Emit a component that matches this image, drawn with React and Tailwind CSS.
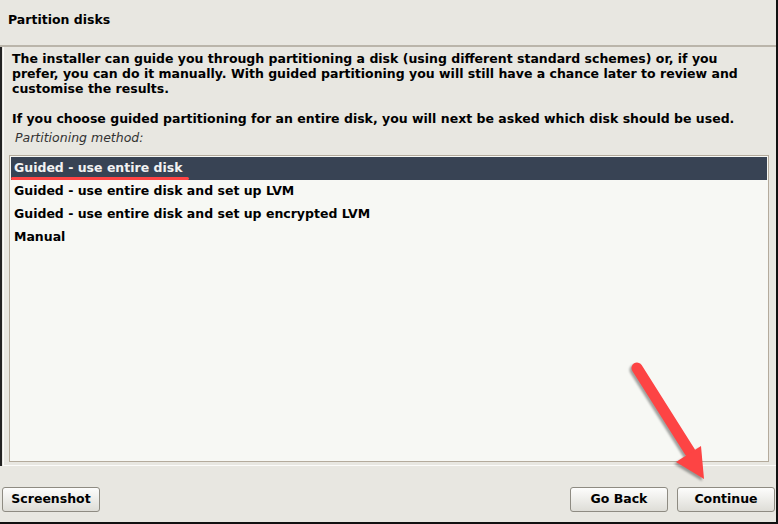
import React from 'react';

const font = { fontFamily: '"DejaVu Sans", "Liberation Sans", sans-serif' };

const methods = [
    'Guided - use entire disk',
    'Guided - use entire disk and set up LVM',
    'Guided - use entire disk and set up encrypted LVM',
    'Manual',
];

const Button = ({ children, className }) => (
    <button className={`h-[25px] border border-[#8e8b82] rounded-[3px] bg-gradient-to-b from-[#fdfdfc] to-[#deddd7] text-[12.5px] font-bold text-black ${className}`}>
        {children}
    </button>
);

const Arrow = () => (
    <svg className="absolute left-0 top-0 pointer-events-none" width="778" height="524" viewBox="0 0 778 524" style={{ filter: 'drop-shadow(-2px 2px 1px rgba(0,0,0,0.35))' }}>
        <line x1="637" y1="368" x2="690" y2="452" stroke="#fd4444" strokeWidth="11" strokeLinecap="round" />
        <polygon points="676,462 701,446 704,479" fill="#fd4444" />
    </svg>
);

export default function App() {
    return (
        <div style={font} className="relative w-[778px] h-[524px] bg-[#e8e7e1] flex flex-col border-r-2 border-b-2 border-[#111] overflow-hidden">
            <div className="h-[47px] border-b-2 border-[#bab5aa] flex items-center px-[8px] shrink-0">
                <h1 className="text-[12.5px] font-bold text-black -mt-[4px]">Partition disks</h1>
            </div>
            <div className="flex-1 flex flex-col border-l-2 border-[#222] pl-[1px]">
                <div className="flex-1 flex flex-col border-l border-b border-[#fbfbf9] pt-[4px] pb-[3px] pr-[7px] pl-[5px]">
                    <div className="text-[12.5px] leading-[15px] font-bold text-black pl-[3px] pr-[9px]">
                        <p>The installer can guide you through partitioning a disk (using different standard schemes) or, if you prefer, you can do it manually. With guided partitioning you will still have a chance later to review and customise the results.</p>
                        <p className="mt-[15px]">If you choose guided partitioning for an entire disk, you will next be asked which disk should be used.</p>
                    </div>
                    <p className="text-[12.5px] italic text-[#333] pl-[6px] mt-[4px] leading-[15px]">Partitioning method:</p>
                    <div className="mt-[10px] flex-1 border border-[#b4ab9c] bg-[#f7f8f4] p-[1px]">
                        {methods.map((m, i) => (
                            <div key={m} className={`h-[23px] flex items-center pl-[3px] text-[12.5px] font-bold ${i === 0 ? 'bg-[#384354] text-[#f2f2f2] relative' : 'text-black'}`}>
                                {m}
                                {i === 0 && <span className="absolute left-0 top-[20px] w-[178px] h-[3px] bg-[#ff4444] rounded-full" />}
                            </div>
                        ))}
                    </div>
                </div>
            </div>
            <div className="h-[56px] shrink-0 flex items-start pt-[21px] pl-[2px] pr-[1px]">
                <Button className="w-[98px]">Screenshot</Button>
                <div className="flex-1" />
                <Button className="w-[98px] mr-[9px]">Go Back</Button>
                <Button className="w-[98px]">Continue</Button>
            </div>
            <Arrow />
        </div>
    );
}
